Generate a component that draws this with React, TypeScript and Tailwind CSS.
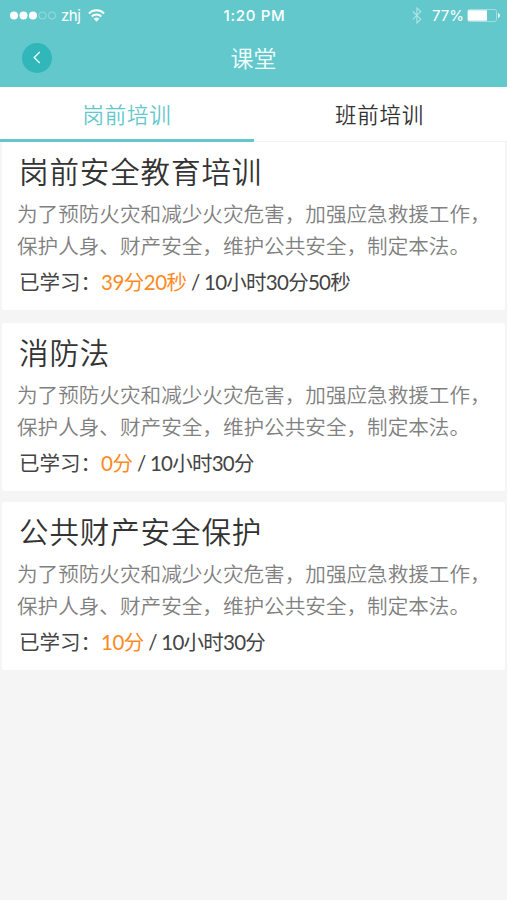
const lessons = [
  {
    title: '岗前安全教育培训',
    learned: '39分20秒',
    total: '10小时30分50秒',
    card: 'h-[168px] mb-[13px]',
  },
  {
    title: '消防法',
    learned: '0分',
    total: '10小时30分',
    card: 'h-[168px] mb-[11px]',
  },
  {
    title: '公共财产安全保护',
    learned: '10分',
    total: '10小时30分',
    card: 'h-[168px]',
  },
];

const description = ['为了预防火灾和减少火灾危害，加强应急救援工作，', '保护人身、财产安全，维护公共安全，制定本法。'];

function StatusBar() {
  return (
    <div className="grid h-[31px] grid-cols-3 items-center font-['Inter','Noto_Sans_CJK_SC',sans-serif] text-[15px] font-medium text-white">
      <div className="flex items-center pl-[10px]">
        <svg width="46" height="9" viewBox="0 0 46 9">
          <circle cx="4" cy="4.5" r="4" fill="#fff" />
          <circle cx="13.5" cy="4.5" r="4" fill="#fff" />
          <circle cx="23" cy="4.5" r="4" fill="#fff" />
          <circle cx="32.5" cy="4.5" r="3.6" fill="none" stroke="#a9e0e1" strokeWidth="0.8" />
          <circle cx="42" cy="4.5" r="3.6" fill="none" stroke="#a9e0e1" strokeWidth="0.8" />
        </svg>
        <span className="ml-[5px] w-[20px] text-[15px] font-normal leading-none tracking-[-0.5px]">zhj</span>
        <svg className="ml-[7px]" width="17" height="13" viewBox="0 0 17 13" fill="none" stroke="#fff">
          <path d="M0.9 4.5a10.8 10.8 0 0 1 15.2 0" strokeWidth="2" />
          <path d="M3.7 7.5a6.8 6.8 0 0 1 9.6 0" strokeWidth="2" />
          <path d="M8.5 12.7L5.7 9.8a4 4 0 0 1 5.6 0z" fill="#fff" stroke="none" />
        </svg>
      </div>
      <div className="pl-[2px] pt-px text-center tracking-[0.7px]">1:20 PM</div>
      <div className="flex items-center justify-end pr-[7px]">
        <svg width="10" height="17" viewBox="0 0 10 17" fill="none" stroke="#b0e4e5" strokeWidth="1.1">
          <path d="M0.8 4.5l8 7.7-3.9 3.8v-15l3.9 3.6-8 7.8" />
        </svg>
        <span className="ml-[10px] w-[31px] font-normal leading-none">77%</span>
        <svg className="ml-[4px]" width="33" height="13" viewBox="0 0 33 13">
          <rect x="0.5" y="0.5" width="29" height="12" rx="2" fill="none" stroke="#a5dedf" />
          <rect x="1" y="1.2" width="19" height="10.6" rx="0.8" fill="#fff" />
          <path d="M31 4q2 0.7 2 2.5T31 9z" fill="#fff" />
        </svg>
      </div>
    </div>
  );
}

function Header() {
  return (
    <header className="h-[87px] bg-[#62c8cc]">
      <StatusBar />
      <div className="grid h-[53px] grid-cols-3 items-center">
        <button className="ml-[22px] flex h-[30px] w-[30px] items-center justify-center rounded-full bg-[#31b6ba]">
          <svg width="8" height="13" viewBox="0 0 8 13" fill="none" stroke="#e5ffff" strokeWidth="1.4">
            <path d="M6.8 1L1.2 6.5l5.6 5.5" />
          </svg>
        </button>
        <h1 className="pb-px text-center text-[23px] font-[350] leading-none text-[#f2ffff]">课堂</h1>
      </div>
    </header>
  );
}

function Tabs() {
  return (
    <nav className="grid h-[55px] grid-cols-[254px_253px] bg-white text-[21.5px] font-[350] tracking-[0.7px]">
      <div className="flex items-center justify-center border-b-[3px] border-[#62c8cc] pt-[2px] text-[#62c8cc]">岗前培训</div>
      <div className="flex items-center justify-center border-b border-[#f3f3f3] pr-[2px] text-[#333]">班前培训</div>
    </nav>
  );
}

export default function App() {
  return (
    <div className="h-[900px] w-[507px] overflow-hidden bg-[#f5f5f5] font-['Noto_Sans_CJK_SC',sans-serif]">
      <Header />
      <Tabs />
      <main className="px-[2px] font-[350]">
        {lessons.map(({ title, learned, total, card }) => (
          <section key={title} className={`rounded-[2px] bg-white pl-[17px] ${card}`}>
            <h2 className="pt-[8px] text-[29.5px] leading-[40px] tracking-[0.9px] text-[#333]">{title}</h2>
            <div className="-ml-[2px] mt-[7px] whitespace-nowrap text-[20.6px] leading-[32px] text-[#808080]">
              {description.map((line) => (
                <p key={line}>{line}</p>
              ))}
            </div>
            <div className="mt-[5px] flex whitespace-pre font-['Lato','Noto_Sans_CJK_SC',sans-serif] text-[20.5px] font-normal leading-[32px] text-[#444]">
              <span>已学习：</span>
              <span className="tracking-[-0.5px] text-[#fd8a1f]">{learned}</span>
              <span className="tracking-[-0.75px]"> / {total}</span>
            </div>
          </section>
        ))}
      </main>
    </div>
  );
}
